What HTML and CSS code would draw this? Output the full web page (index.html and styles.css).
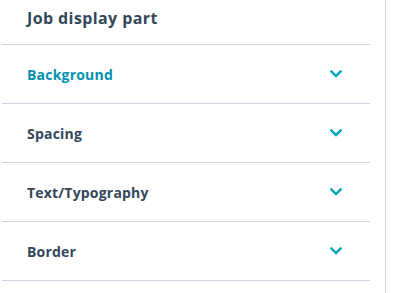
FILE: index.html
```html
<!DOCTYPE html>
<html lang="en">
<head>
<meta charset="utf-8">
<link rel="stylesheet" href="styles.css">
</head>
<body>
<div class="layout">
  <aside class="panel">
    <div class="panel-title">Job display part</div>
    <div class="section active">
      <span class="label">Background</span>
      <svg class="chev" width="12" height="8" viewBox="0 0 12 8"><path d="M1.5 1.5 L6 6 L10.5 1.5" fill="none" stroke="#00a4bd" stroke-width="2.4" stroke-linecap="square"/></svg>
    </div>
    <div class="section">
      <span class="label">Spacing</span>
      <svg class="chev" width="12" height="8" viewBox="0 0 12 8"><path d="M1.5 1.5 L6 6 L10.5 1.5" fill="none" stroke="#00a4bd" stroke-width="2.4" stroke-linecap="square"/></svg>
    </div>
    <div class="section">
      <span class="label">Text/Typography</span>
      <svg class="chev" width="12" height="8" viewBox="0 0 12 8"><path d="M1.5 1.5 L6 6 L10.5 1.5" fill="none" stroke="#00a4bd" stroke-width="2.4" stroke-linecap="square"/></svg>
    </div>
    <div class="section">
      <span class="label">Border</span>
      <svg class="chev" width="12" height="8" viewBox="0 0 12 8"><path d="M1.5 1.5 L6 6 L10.5 1.5" fill="none" stroke="#00a4bd" stroke-width="2.4" stroke-linecap="square"/></svg>
    </div>
  </aside>
  <div class="divider"></div>
</div>
</body>
</html>
```
FILE: styles.css
```css
html, body {
  margin: 0;
  padding: 0;
  background: #ffffff;
}
body {
  font-family: "Open Sans", "Liberation Sans", sans-serif;
  color: #33475b;
  height: 293px;
  overflow: hidden;
}
.layout {
  display: flex;
  height: 293px;
}
.panel {
  width: 368px;
  margin-left: 2px;
  flex: none;
}
.divider {
  width: 1px;
  margin-left: 15px;
  background: #cbd6e2;
  align-self: stretch;
}
.panel-title {
  height: 45px;
  box-sizing: border-box;
  padding-left: 25px;
  padding-top: 6px;
  font-size: 16px;
  font-weight: 700;
  letter-spacing: 0.4px;
  line-height: 24px;
  border-bottom: 1px solid #cbd6e2;
}
.section {
  height: 59px;
  box-sizing: border-box;
  display: flex;
  align-items: center;
  justify-content: space-between;
  padding: 0 28px 0 25px;
  border-bottom: 1px solid #cbd6e2;
  font-size: 14px;
  font-weight: 700;
  letter-spacing: 0.2px;
}
.section.active .label {
  color: #0091ae;
}
.chev {
  display: block;
}
```
